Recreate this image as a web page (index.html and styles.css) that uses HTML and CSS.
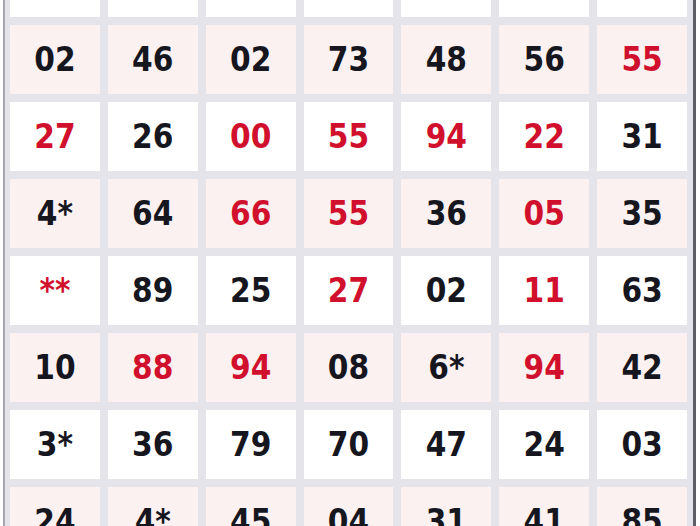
FILE: index.html
```html
<!DOCTYPE html>
<html>
<head>
<meta charset="utf-8">
<link rel="stylesheet" href="styles.css">
</head>
<body>
<div class="page">
  <div class="frame">
    <div class="grid">
      <div class="cell"></div><div class="cell"></div><div class="cell"></div><div class="cell"></div><div class="cell"></div><div class="cell"></div><div class="cell"></div>

      <div class="cell alt">02</div><div class="cell alt">46</div><div class="cell alt">02</div><div class="cell alt">73</div><div class="cell alt">48</div><div class="cell alt">56</div><div class="cell alt hit">55</div>

      <div class="cell hit">27</div><div class="cell">26</div><div class="cell hit">00</div><div class="cell hit">55</div><div class="cell hit">94</div><div class="cell hit">22</div><div class="cell">31</div>

      <div class="cell alt">4*</div><div class="cell alt">64</div><div class="cell alt hit">66</div><div class="cell alt hit">55</div><div class="cell alt">36</div><div class="cell alt hit">05</div><div class="cell alt">35</div>

      <div class="cell hit">**</div><div class="cell">89</div><div class="cell">25</div><div class="cell hit">27</div><div class="cell">02</div><div class="cell hit">11</div><div class="cell">63</div>

      <div class="cell alt">10</div><div class="cell alt hit">88</div><div class="cell alt hit">94</div><div class="cell alt">08</div><div class="cell alt">6*</div><div class="cell alt hit">94</div><div class="cell alt">42</div>

      <div class="cell">3*</div><div class="cell">36</div><div class="cell">79</div><div class="cell">70</div><div class="cell">47</div><div class="cell">24</div><div class="cell">03</div>

      <div class="cell alt">24</div><div class="cell alt">4*</div><div class="cell alt">45</div><div class="cell alt">04</div><div class="cell alt">31</div><div class="cell alt">41</div><div class="cell alt">85</div>
    </div>
  </div>
</div>
</body>
</html>
```
FILE: styles.css
```css
html, body {
  margin: 0;
  padding: 0;
  background: #ffffff;
  overflow: hidden;
}
.page {
  width: 700px;
  height: 526px;
  overflow: hidden;
  padding: 0 4px 0 3px;
  box-sizing: border-box;
}
.frame {
  border-left: 2px solid #a6a6ae;
  border-right: 3px solid #5e5e66;
  background: #e4e4ea;
  padding: 0 6px 0 5px;
  margin-top: -52px;
  padding-bottom: 20px;
}
.grid {
  display: grid;
  grid-template-columns: repeat(7, 1fr);
  grid-auto-rows: 69px;
  gap: 8px;
}
.cell {
  background: #ffffff;
  display: flex;
  align-items: center;
  justify-content: center;
  font-family: "DejaVu Sans Condensed", "DejaVu Sans", sans-serif;
  font-stretch: condensed;
  font-weight: bold;
  font-size: 33px;
  color: #16161f;
}
.cell.alt {
  background: #fbf1f1;
}
.cell.hit {
  color: #d0102c;
}
```
